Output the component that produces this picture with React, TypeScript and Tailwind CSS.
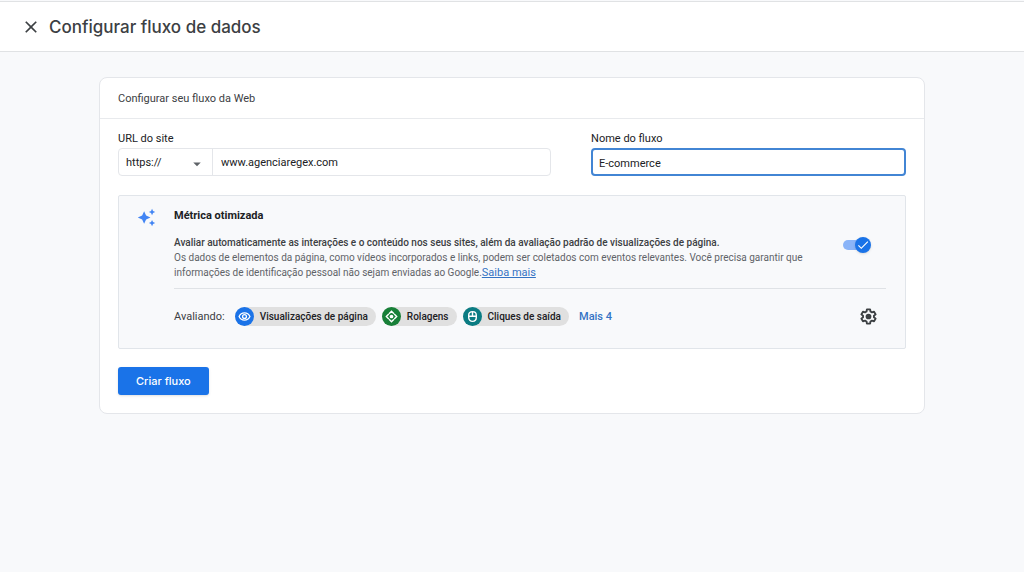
import React, { useState } from "react";
import { MdArrowDropDown, MdAutoAwesome, MdCheck, MdClose } from "react-icons/md";

type IconProps = { size: number };

function EyeIcon({ size }: IconProps) {
  return (
    <svg width={size} height={size} viewBox="0 0 24 24" fill="none" stroke="currentColor" strokeWidth="2.4" aria-hidden>
      <path d="M2 12c2-4.500 5.600-6.800 10-6.800S20 7.500 22 12c-2 4.500-5.600 6.800-10 6.800S4 16.500 2 12z" />
      <circle cx="12" cy="12" r="3.600" />
    </svg>
  );
}

function ScrollIcon({ size }: IconProps) {
  return (
    <svg width={size} height={size} viewBox="0 0 24 24" fill="none" stroke="currentColor" strokeWidth="2.6" aria-hidden>
      <path d="M7.500 7 12 2.500 16.500 7M7.500 17l4.500 4.500 4.500-4.500M7 7.500 2.500 12 7 16.500M17 7.500l4.500 4.500-4.500 4.500" />
      <circle cx="12" cy="12" r="3.400" fill="currentColor" stroke="none" />
    </svg>
  );
}

function MouseIcon({ size }: IconProps) {
  return (
    <svg width={size} height={size} viewBox="0 0 24 24" fill="none" stroke="currentColor" strokeWidth="2.6" aria-hidden>
      <path d="M5 9.500C5 5.500 8 3 12 3s7 2.500 7 6.500V14c0 4-3 7-7 7s-7-3-7-7zM5 11.500h14M12 3v8.500" />
    </svg>
  );
}

function GearIcon({ size }: IconProps) {
  return (
    <svg width={size} height={size} viewBox="0 0 24 24" fill="none" stroke="currentColor" aria-hidden>
      <path
        strokeWidth="2.400"
        strokeLinejoin="round"
        d="M10 3h4l.5 2.700 1.900 1.100 2.600-.9 2 3.400-2.100 1.800v1.800l2.100 1.800-2 3.400-2.600-.9-1.900 1.100L14 21h-4l-.5-2.700-1.900-1.100-2.600.9-2-3.400 2.100-1.800v-1.800L3 9.300l2-3.400 2.600.9 1.900-1.100z"
      />
      <circle cx="12" cy="12" r="3.600" fill="currentColor" stroke="none" />
    </svg>
  );
}

type ChipProps = { icon: React.ComponentType<IconProps>; label: string; color: string };

const chips: ChipProps[] = [
  { icon: EyeIcon, label: "Visualizações de página", color: "bg-[#1a73e8]" },
  { icon: ScrollIcon, label: "Rolagens", color: "bg-[#188038]" },
  { icon: MouseIcon, label: "Cliques de saída", color: "bg-[#0b7c83]" },
];

function Chip({ icon: Icon, label, color }: ChipProps) {
  return (
    <li className="flex h-[19px] items-center gap-1.5 rounded-full bg-[#e0e0e0] pr-2 text-[10px] font-medium text-[#202124]">
      <span className={`flex size-[19px] items-center justify-center rounded-full text-white ${color}`}>
        <Icon size={13} />
      </span>
      {label}
    </li>
  );
}

export default function App() {
  const [protocol, setProtocol] = useState("https://");
  const [url, setUrl] = useState("www.agenciaregex.com");
  const [name, setName] = useState("E-commerce");
  const [enhanced, setEnhanced] = useState(true);

  return (
    <div className="min-h-screen bg-[#f8f9fb] pt-px font-[Roboto,'Liberation_Sans',sans-serif] text-[11px] text-[#3c4043]">
      <header className="flex h-[51px] items-center gap-2 border-y border-[#e0e2e4] bg-white px-[21px]">
        <button type="button" aria-label="Fechar" className="flex size-5 items-center justify-center text-[#3c4043]">
          <MdClose size={20} />
        </button>
        <h1 className="pt-0.5 font-[Inter,sans-serif] text-[17px] font-medium">Configurar fluxo de dados</h1>
      </header>

      <main className="px-[99px] pt-[25px]">
        <section className="rounded-lg border border-[#e4e6ea] bg-white">
          <h2 className="flex h-[41px] items-center border-b border-[#e8eaed] px-[18px] pt-0.5">
            Configurar seu fluxo da Web
          </h2>

          <form className="px-[18px] pt-3 pb-[18px]" onSubmit={(e) => e.preventDefault()}>
            <div className="grid grid-cols-[11fr_8fr] gap-10">
              <div>
                <label htmlFor="url" className="mb-px block leading-4 text-[#202124]">
                  URL do site
                </label>
                <div className="flex h-7 rounded border border-[#e4e6ea]">
                  <div className="relative w-[94px] border-r border-[#e4e6ea]">
                    <select
                      aria-label="Protocolo"
                      value={protocol}
                      onChange={(e) => setProtocol(e.target.value)}
                      className="h-full w-full appearance-none bg-transparent px-[7px] pt-0.5 text-[#202124] outline-none"
                    >
                      <option>https://</option>
                      <option>http://</option>
                    </select>
                    <MdArrowDropDown
                      size={18}
                      aria-hidden
                      className="pointer-events-none absolute top-1.5 right-1.5 text-[#5f6368]"
                    />
                  </div>
                  <input
                    id="url"
                    value={url}
                    onChange={(e) => setUrl(e.target.value)}
                    className="min-w-0 flex-1 bg-transparent px-2 pt-0.5 text-[#202124] outline-none"
                  />
                </div>
              </div>
              <div>
                <label htmlFor="name" className="mb-px block leading-4 text-[#202124]">
                  Nome do fluxo
                </label>
                <input
                  id="name"
                  value={name}
                  onChange={(e) => setName(e.target.value)}
                  className="h-7 w-full rounded border-2 border-[#4285d4] bg-white px-1.5 pt-0.5 text-[#202124] outline-none"
                />
              </div>
            </div>

            <div className="mt-[19px] flex gap-[18px] rounded-xs border border-[#e1e5ea] bg-[#f8f9fb] pt-3 pr-[19px] pb-[22px] pl-[18px]">
              <MdAutoAwesome size={19} aria-hidden className="shrink-0 text-[#4285f4]" />
              <div className="min-w-0 flex-1">
                <div className="flex items-center justify-between border-b border-[#dfe2e6] pb-2">
                  <div className="max-w-[630px]">
                    <h3 className="leading-4 font-bold text-[#202124]">Métrica otimizada</h3>
                    <div className="mt-[11px] text-[10px] leading-[15px] text-[#5f6368]">
                      <p className="font-medium text-[#3c4043]">
                        Avaliar automaticamente as interações e o conteúdo nos seus sites, além da avaliação padrão de
                        visualizações de página.
                      </p>
                      <p>
                        Os dados de elementos da página, como vídeos incorporados e links, podem ser coletados com
                        eventos relevantes. Você precisa garantir que informações de identificação pessoal não sejam
                        enviadas ao Google.
                        <a href="#saiba-mais" className="text-[11px] leading-[15px] text-[#3473c4] underline">
                          Saiba mais
                        </a>
                      </p>
                    </div>
                  </div>
                  <label className="relative mt-0.5 mr-[15px] flex h-4 w-7 items-center">
                    <input
                      type="checkbox"
                      role="switch"
                      aria-label="Métrica otimizada"
                      checked={enhanced}
                      onChange={(e) => setEnhanced(e.target.checked)}
                      className="peer sr-only"
                    />
                    <span className="h-2.5 w-6 rounded-full bg-[#bdc1c6] peer-checked:bg-[#8ab4f8]" />
                    <span className="absolute left-0 flex size-4 items-center justify-center rounded-full bg-[#1a73e8] text-white shadow-sm peer-checked:left-3">
                      <MdCheck size={14} aria-hidden />
                    </span>
                  </label>
                </div>

                <div className="mt-[18px] flex h-[19px] items-center">
                  <span className="mr-2.5 pt-0.5">Avaliando:</span>
                  <ul className="flex gap-1.5">
                    {chips.map((chip) => (
                      <Chip key={chip.label} {...chip} />
                    ))}
                  </ul>
                  <a href="#mais" className="ml-2.5 pt-0.5 font-medium text-[#3473c4]">
                    Mais 4
                  </a>
                  <button type="button" aria-label="Configurações" className="mr-2 ml-auto text-[#3c4043]">
                    <GearIcon size={19} />
                  </button>
                </div>
              </div>
            </div>

            <button
              type="submit"
              className="mt-[18px] h-7 rounded-[3px] bg-[#1a73e8] px-[18px] font-[Inter,sans-serif] font-medium text-white shadow-sm"
            >
              Criar fluxo
            </button>
          </form>
        </section>
      </main>
    </div>
  );
}
